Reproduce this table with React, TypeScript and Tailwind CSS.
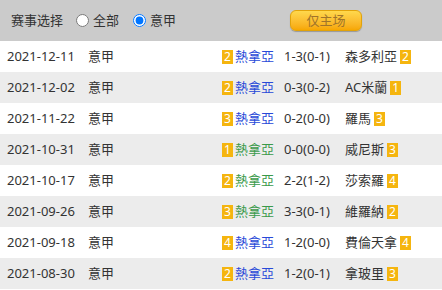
import { useState } from "react";

type Match = {
  date: string;
  home: string;
  homeRank: number;
  homeColor: "blue" | "green";
  score: string;
  away: string;
  awayRank: number;
};

const MATCHES: Match[] = [
  { date: "2021-12-11", home: "熱拿亞", homeRank: 2, homeColor: "blue", score: "1-3(0-1)", away: "森多利亞", awayRank: 2 },
  { date: "2021-12-02", home: "熱拿亞", homeRank: 2, homeColor: "blue", score: "0-3(0-2)", away: "AC米蘭", awayRank: 1 },
  { date: "2021-11-22", home: "熱拿亞", homeRank: 3, homeColor: "blue", score: "0-2(0-0)", away: "羅馬", awayRank: 3 },
  { date: "2021-10-31", home: "熱拿亞", homeRank: 1, homeColor: "green", score: "0-0(0-0)", away: "威尼斯", awayRank: 3 },
  { date: "2021-10-17", home: "熱拿亞", homeRank: 2, homeColor: "green", score: "2-2(1-2)", away: "莎索羅", awayRank: 4 },
  { date: "2021-09-26", home: "熱拿亞", homeRank: 3, homeColor: "green", score: "3-3(0-1)", away: "維羅納", awayRank: 2 },
  { date: "2021-09-18", home: "熱拿亞", homeRank: 4, homeColor: "blue", score: "1-2(0-0)", away: "費倫天拿", awayRank: 4 },
  { date: "2021-08-30", home: "熱拿亞", homeRank: 2, homeColor: "blue", score: "1-2(0-1)", away: "拿玻里", awayRank: 3 },
];

function Rank({ n }: { n: number }) {
  return (
    <span className="inline-flex h-[14px] w-[11px] items-center justify-center bg-[#f5b50f] text-[12px] leading-none text-white">
      {n}
    </span>
  );
}

export default function App() {
  const [filter, setFilter] = useState<"all" | "serie">("serie");

  return (
    <div
      className="w-[442px] h-[290px] overflow-hidden bg-white text-[13px] text-[#333]"
      style={{ fontFamily: '"Noto Sans", "Noto Sans CJK SC", sans-serif' }}
    >
      {/* filter bar */}
      <div className="flex h-[41px] items-center bg-[#cbcbcb] pl-[11px]">
        <span>赛事选择</span>
        <label className="ml-[13px] flex items-center gap-[4px]">
          <input
            type="radio"
            name="league"
            checked={filter === "all"}
            onChange={() => setFilter("all")}
            className="m-0 h-[13px] w-[13px]"
          />
          全部
        </label>
        <label className="ml-[14px] flex items-center gap-[4px]">
          <input
            type="radio"
            name="league"
            checked={filter === "serie"}
            onChange={() => setFilter("serie")}
            className="m-0 h-[13px] w-[13px] accent-[#0075ff]"
          />
          意甲
        </label>
        <button className="ml-[114px] h-[21px] w-[72px] rounded-[6px] border border-[#e2a30a] bg-gradient-to-b from-[#ffd84c] to-[#f7a700] text-[13px] leading-none text-[#a0742a] shadow-[0_1px_1px_rgba(0,0,0,0.25)]">
          仅主场
        </button>
      </div>

      {MATCHES.map((m, i) => (
        <div key={m.date} className={`flex h-[31px] items-center ${i % 2 === 1 ? "bg-[#ececec]" : "bg-white"}`}>
          <span className="w-[88px] pl-[7px]">{m.date}</span>
          <span className="w-[60px]">意甲</span>
          <span className="flex w-[129px] items-center justify-end gap-[2px] pr-[3px]">
            <Rank n={m.homeRank} />
            <span className={m.homeColor === "blue" ? "text-[#2849d8]" : "text-[#3a9a4a]"}>{m.home}</span>
          </span>
          <span className="w-[68px] pl-[7px]">{m.score}</span>
          <span className="flex items-center gap-[3px]">
            <span>{m.away}</span>
            <Rank n={m.awayRank} />
          </span>
        </div>
      ))}
    </div>
  );
}
